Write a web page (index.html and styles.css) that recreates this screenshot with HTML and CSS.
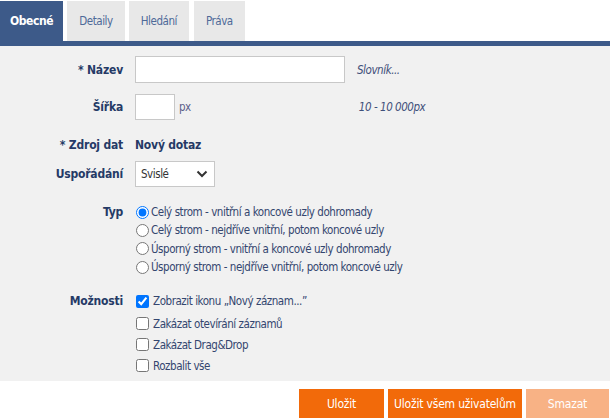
FILE: index.html
```html
<!DOCTYPE html>
<html lang="cs">
<head>
    <meta charset="UTF-8">
    <title>Strom - nastavení</title>
    <link rel="stylesheet" href="styles.css">
</head>
<body>
    <div class="page">
        <div class="tabs">
            <div class="tab active">Obecné</div>
            <div class="tab">Detaily</div>
            <div class="tab tab-search">Hledání</div>
            <div class="tab">Práva</div>
        </div>

        <div class="content">
            <div class="row row-name">
                <label class="label">* Název</label>
                <div class="field">
                    <input type="text" class="input input-name">
                    <span class="hint">Slovník...</span>
                </div>
            </div>

            <div class="row row-width">
                <label class="label">Šířka</label>
                <div class="field">
                    <input type="text" class="input input-width">
                    <span class="unit">px</span>
                    <span class="hint hint-range">10 - 10 000px</span>
                </div>
            </div>

            <div class="row row-source">
                <label class="label">* Zdroj dat</label>
                <div class="field value">Nový dotaz</div>
            </div>

            <div class="row row-order">
                <label class="label">Uspořádání</label>
                <div class="field">
                    <div class="select">
                        <span>Svislé</span>
                        <svg width="12" height="8" viewBox="0 0 12 8"><path d="M1.5 1.5 L6 6 L10.5 1.5" fill="none" stroke="#333" stroke-width="2"/></svg>
                    </div>
                </div>
            </div>

            <div class="row row-type">
                <label class="label">Typ</label>
                <div class="field options radios">
                    <label class="option"><input type="radio" name="typ" checked>Celý strom - vnitřní a koncové uzly dohromady</label>
                    <label class="option"><input type="radio" name="typ">Celý strom - nejdříve vnitřní, potom koncové uzly</label>
                    <label class="option"><input type="radio" name="typ">Úsporný strom - vnitřní a koncové uzly dohromady</label>
                    <label class="option"><input type="radio" name="typ">Úsporný strom - nejdříve vnitřní, potom koncové uzly</label>
                </div>
            </div>

            <div class="row row-opts">
                <label class="label">Možnosti</label>
                <div class="field options checks">
                    <label class="option"><input type="checkbox" checked>Zobrazit ikonu „Nový záznam...”</label>
                    <label class="option"><input type="checkbox">Zakázat otevírání záznamů</label>
                    <label class="option"><input type="checkbox">Zakázat Drag&amp;Drop</label>
                    <label class="option"><input type="checkbox">Rozbalit vše</label>
                </div>
            </div>
        </div>

        <div class="footer">
            <button class="btn btn-save">Uložit</button>
            <button class="btn btn-all">Uložit všem uživatelům</button>
            <button class="btn disabled">Smazat</button>
        </div>
    </div>
</body>
</html>
```

FILE: styles.css
```css
body {
    margin: 0;
    font-family: "DejaVu Sans Condensed", "DejaVu Sans", sans-serif;
    font-size: 11.5px;
    letter-spacing: -0.45px;
    color: #34466f;
    background: #fff;
}
.page {
    width: 610px;
}
.tabs {
    display: flex;
    gap: 4px;
    padding-top: 1px;
    border-bottom: 5px solid #3d5a89;
}
.tab {
    height: 40px;
    line-height: 40px;
    padding: 0 12px;
    background: #e8e8e8;
    color: #4e6a98;
}
.tab-search {
    margin-right: 1px;
}
.tab.active {
    background: #3d5a89;
    color: #fff;
    font-weight: bold;
    font-size: 12px;
    letter-spacing: -0.4px;
    padding: 0 10px;
}
.content {
    background: #f1f1f1;
    height: 325px;
    padding-top: 10px;
}
.row {
    display: grid;
    grid-template-columns: 123px 1fr;
    column-gap: 12px;
    align-items: center;
}
.label {
    text-align: right;
    font-weight: bold;
    color: #253a66;
    font-size: 12px;
    letter-spacing: -0.2px;
}
.field {
    display: flex;
    align-items: center;
}
.input {
    box-sizing: border-box;
    border: 1px solid #c8c8c8;
    background: #fff;
    height: 27px;
    margin: 0;
    padding: 0 5px;
}
.input-name {
    width: 210px;
}
.input-width {
    width: 40px;
    height: 26px;
}
.unit {
    margin-left: 4px;
    color: #5c5f8a;
}
.hint {
    font-style: italic;
    color: #3f4f7a;
    margin-left: 12px;
}
.hint-range {
    margin-left: 168px;
}
.row-width {
    margin-top: 11px;
}
.row-source {
    margin-top: 14px;
    height: 22px;
}
.value {
    font-weight: bold;
    color: #253a66;
    font-size: 12px;
    letter-spacing: -0.2px;
}
.row-order {
    margin-top: 5px;
}
.select {
    box-sizing: border-box;
    width: 80px;
    height: 26px;
    border: 1px solid #c8c8c8;
    background: #fff;
    display: flex;
    align-items: center;
    justify-content: space-between;
    padding: 0 6px 0 5px;
    color: #333;
}
.row-type {
    margin-top: 16px;
    align-items: start;
}
.row-type .label {
    line-height: 18px;
}
.options {
    flex-direction: column;
    align-items: flex-start;
}
.radios .option {
    height: 18.3px;
    display: flex;
    align-items: center;
}
.option input {
    margin: 0 2px 0 1px;
}
.radios input {
    width: 13px;
    height: 13px;
}
.row-opts {
    margin-top: 16px;
    align-items: start;
}
.row-opts .label {
    line-height: 18px;
}
.checks .option {
    height: 21px;
    display: flex;
    align-items: center;
}
.checks .option:first-child {
    height: 18px;
    margin-bottom: 3px;
}
.checks input {
    width: 13px;
    height: 13px;
    margin-right: 4px;
    margin-left: 1px;
}
.footer {
    display: flex;
    justify-content: flex-end;
    gap: 4px;
    padding: 8px 1px 2px 0;
}
.btn {
    height: 29px;
    border: none;
    background: #f26a0a;
    color: #fff;
    font-family: inherit;
    font-size: 12px;
    letter-spacing: -0.2px;
    padding: 0;
}
.btn-save {
    width: 85px;
}
.btn-all {
    width: 134px;
}
.btn.disabled {
    background: #f8b285;
    width: 83px;
}
```
